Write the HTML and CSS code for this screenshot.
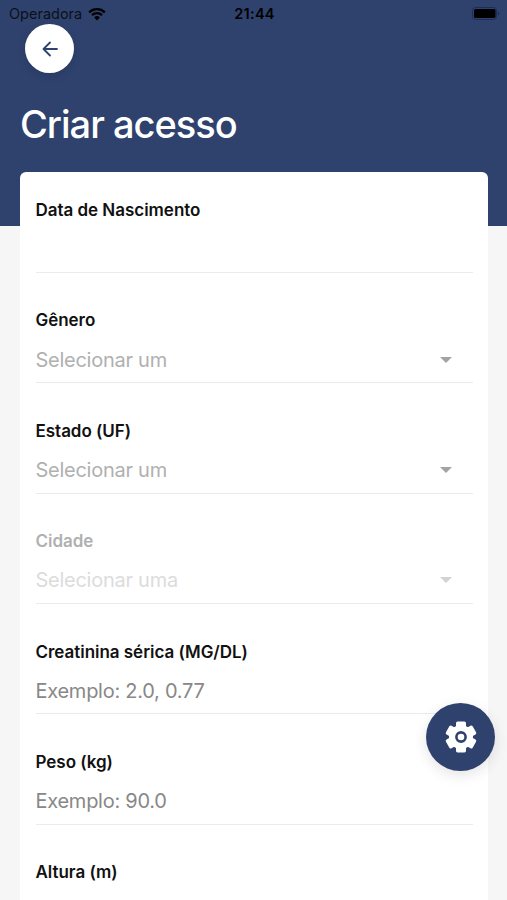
FILE: index.html
```html
<!DOCTYPE html>
<html lang="pt-BR">
<head>
  <meta charset="UTF-8">
  <meta name="viewport" content="width=device-width, initial-scale=1.0">
  <title>Criar acesso</title>
  <link rel="stylesheet" href="styles.css">
</head>
<body>

  <header class="header">
    <div class="status-bar">
      <div class="carrier">
        <span>Operadora</span>
        <svg class="wifi" viewBox="0 0 18 14">
          <path d="M1.2 5.3a11.2 11.2 0 0 1 15.6 0M4 8.2a7.2 7.2 0 0 1 10 0" fill="none" stroke="#000" stroke-width="2.3"/>
          <path d="M9 13.4l-2.9-2.9a4.2 4.2 0 0 1 5.8 0z"/>
        </svg>
      </div>
      <span class="clock">21:44</span>
      <svg class="battery" viewBox="0 0 28 13">
        <rect x=".5" y=".5" width="24" height="12" rx="3" fill="none" stroke="#1f2d54"/>
        <rect x="2" y="2" width="21.5" height="9" rx="1.6"/>
        <path d="M26 4.5q2 2 0 4z" fill="#1b274a"/>
      </svg>
    </div>

    <a href="#" class="back-btn" aria-label="Voltar">
      <svg viewBox="0 0 16 16">
        <path d="M15 8H1.5M8 1.5L1.5 8L8 14.5" fill="none" stroke="#2f426d" stroke-width="1.8" stroke-linecap="round" stroke-linejoin="round"/>
      </svg>
    </a>

    <h1>Criar acesso</h1>
  </header>

  <main class="card">
    <div class="field">
      <div class="label">Data de Nascimento</div>
      <div class="value"></div>
    </div>
    <div class="field">
      <div class="label">Gênero</div>
      <div class="value select"><span>Selecionar um</span><i class="caret"></i></div>
    </div>
    <div class="field">
      <div class="label">Estado (UF)</div>
      <div class="value select"><span>Selecionar um</span><i class="caret"></i></div>
    </div>
    <div class="field disabled">
      <div class="label">Cidade</div>
      <div class="value select"><span>Selecionar uma</span><i class="caret"></i></div>
    </div>
    <div class="field">
      <div class="label">Creatinina sérica (MG/DL)</div>
      <div class="value">Exemplo: 2.0, 0.77</div>
    </div>
    <div class="field">
      <div class="label">Peso (kg)</div>
      <div class="value">Exemplo: 90.0</div>
    </div>
    <div class="field last">
      <div class="label">Altura (m)</div>
    </div>
  </main>

  <button class="fab" aria-label="Configurações">
    <svg viewBox="0 0 32 32">
      <g fill="#fff">
        <circle cx="16" cy="16" r="12"/>
        <rect id="tooth" x="11" y=".6" width="10" height="30.8" rx="1.6"/>
        <use href="#tooth" transform="rotate(60 16 16)"/>
        <use href="#tooth" transform="rotate(120 16 16)"/>
      </g>
      <circle cx="16" cy="16" r="4.6" fill="none" stroke="#2f426d" stroke-width="2.6"/>
    </svg>
  </button>

</body>
</html>
```
FILE: styles.css
```css
* {
  box-sizing: border-box;
}

body {
  margin: 0;
  height: 900px;
  overflow: hidden;
  background-color: #f6f6f6;
  font-family: 'Inter', sans-serif;
  color: #111;
}

.header {
  height: 226px;
  background-color: #2f426d;
}

.status-bar {
  display: grid;
  grid-template-columns: 1fr auto 1fr;
  align-items: center;
  height: 24px;
  padding: 3px 7px 0 9px;
  font-size: 14.5px;
  line-height: 20px;
  color: #000;
}

.carrier {
  display: flex;
  align-items: center;
  gap: 6px;
  color: #0b101b;
}

.wifi {
  width: 18px;
  height: 14px;
}

.clock {
  font-weight: 600;
  letter-spacing: 0.3px;
}

.battery {
  width: 28px;
  height: 13px;
  justify-self: end;
}

.back-btn {
  display: flex;
  align-items: center;
  justify-content: center;
  width: 49px;
  height: 49px;
  margin-left: 25px;
  border-radius: 50%;
  background-color: #fff;
  box-shadow: 0 3px 8px rgba(0, 0, 0, 0.12);
}

.back-btn svg {
  width: 16px;
  height: 16px;
}

h1 {
  margin: 27px 0 0 20px;
  font-size: 38px;
  font-weight: 450;
  line-height: 48px;
  letter-spacing: -1px;
  color: #fff;
}

.card {
  height: 728px;
  margin: -54px 19.5px 0 20px;
  padding: 28px 15px 0 15.5px;
  background-color: #fff;
  border-radius: 6px 6px 0 0;
}

.field {
  height: 72.8px;
  margin-bottom: 37.6px;
  border-bottom: 1.5px solid #ebebeb;
}

.field.last {
  height: auto;
  margin-bottom: 0;
  border-bottom: none;
}

.label {
  font-size: 17px;
  font-weight: 600;
  line-height: 20px;
  letter-spacing: -0.03px;
}

.value {
  display: flex;
  align-items: center;
  height: 30px;
  margin-top: 14.2px;
  font-size: 20px;
  letter-spacing: -0.26px;
  color: #888;
}

.select {
  justify-content: space-between;
  padding-right: 21px;
  color: #b0b0b0;
}

.caret {
  border: 6px solid transparent;
  border-top-color: #a3a3a3;
  border-bottom: 0;
}

.disabled .label {
  color: #b0b0b0;
}

.disabled .value {
  color: #dcdcdc;
}

.disabled .caret {
  border-top-color: #d2d2d2;
}

.fab {
  position: fixed;
  left: 426px;
  top: 703px;
  display: flex;
  align-items: center;
  justify-content: center;
  width: 69px;
  height: 68px;
  padding: 0;
  border: none;
  border-radius: 50%;
  background-color: #2f426d;
  box-shadow: 0 4px 14px rgba(0, 0, 0, 0.11);
}

.fab svg {
  width: 32px;
  height: 32px;
}
```
